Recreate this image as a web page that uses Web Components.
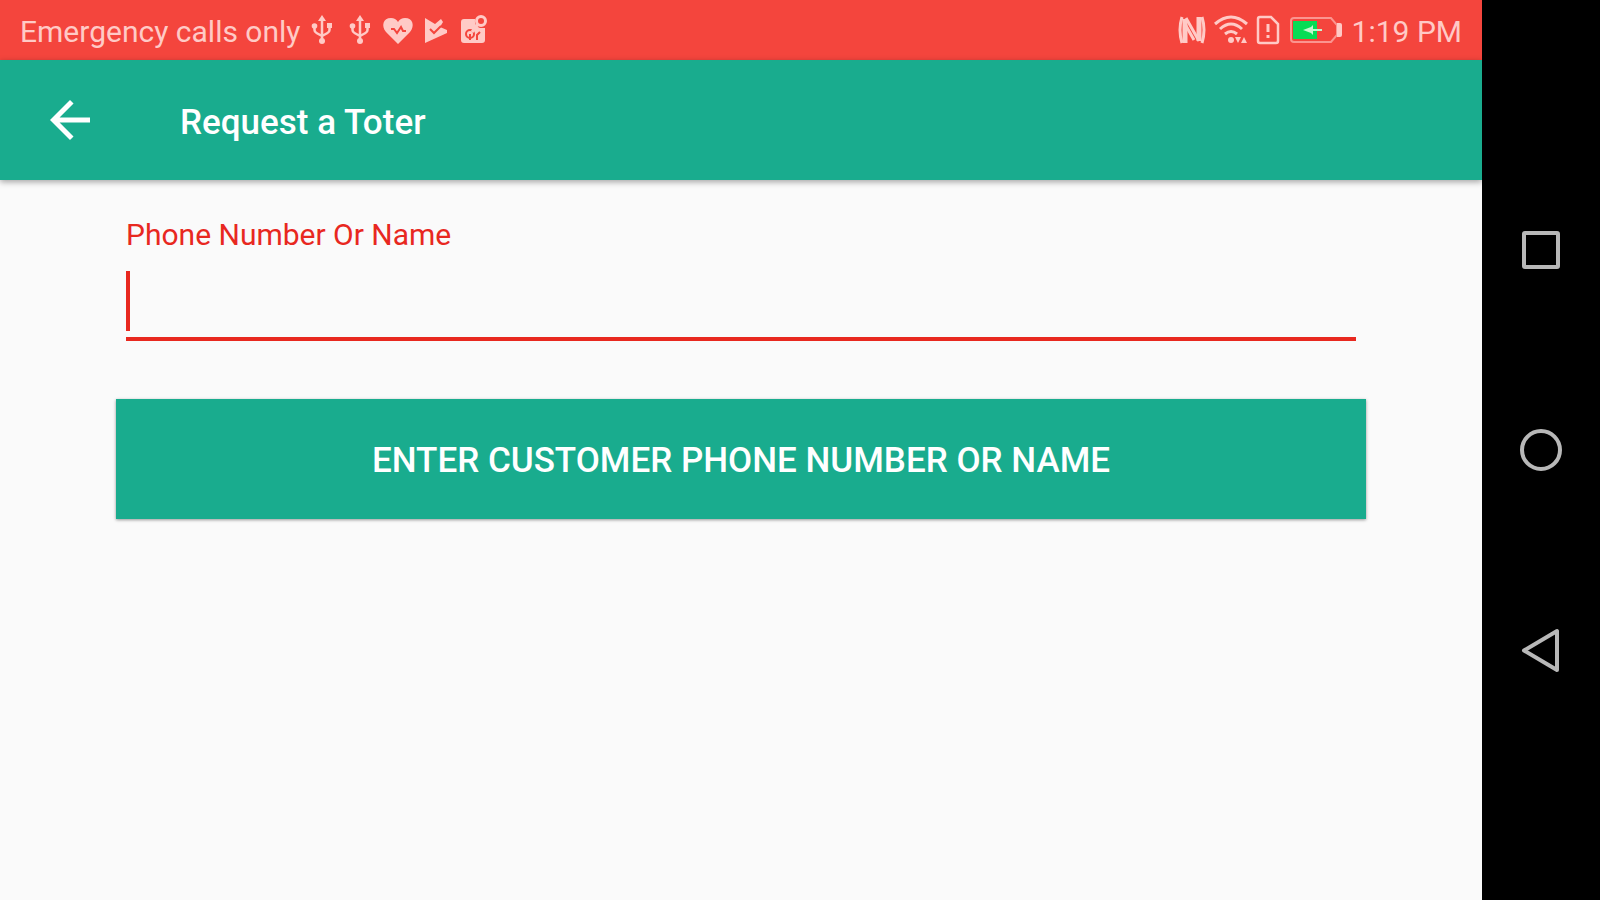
<!DOCTYPE html>
<html lang="en">
<head>
<meta charset="UTF-8">
<meta name="viewport" content="width=device-width, initial-scale=1">
<title>Request a Toter</title>
<style>
  body {
    margin: 0;
    font-family: Roboto, "Liberation Sans", sans-serif;
    --brand: #19ac8e;
    --accent: #e8281f;
    --status: #f4453d;
    --status-ink: #ffcac6;
  }
  form {
    display: flex;
    flex-direction: column;
    gap: 58px;
    padding: 37px 116px;
  }
</style>
</head>
<body>
<device-frame>
  <status-bar carrier="Emergency calls only" time="1:19 PM"></status-bar>
  <app-bar>Request a Toter</app-bar>
  <form>
    <text-field label="Phone Number Or Name"></text-field>
    <action-button>Enter customer phone number or name</action-button>
  </form>
  <nav-bar slot="nav"></nav-bar>
</device-frame>

<script>
class DeviceFrame extends HTMLElement {
  constructor() {
    super();
    this.attachShadow({ mode: 'open' });
    this.shadowRoot.innerHTML = `
      <style>
        :host {
          display: flex;
          min-height: 100vh;
          background: #fafafa;
        }
        main {
          flex: 1;
          min-width: 0;
        }
      </style>
      <main><slot></slot></main>
      <slot name="nav"></slot>
    `;
  }
}

class StatusBar extends HTMLElement {
  constructor() {
    super();
    this.attachShadow({ mode: 'open' });
  }

  connectedCallback() {
    const usb = `
      <svg width="38" height="30" viewBox="0 0 38 30" fill="currentColor">
        <path d="M19 0l4 6h-8z"/>
        <circle cx="19" cy="26" r="3"/>
        <circle cx="11.5" cy="11" r="2.8"/>
        <path d="M24 8h5v5h-5z"/>
        <path d="M19 4v21M11.5 11v4q0 2 2 3l5.500 3M26.500 11v4q0 2-2 3L19 21" fill="none" stroke="currentColor" stroke-width="2.500"/>
      </svg>`;

    this.shadowRoot.innerHTML = `
      <style>
        :host {
          display: flex;
          justify-content: space-between;
          align-items: center;
          height: 60px;
          padding: 0 20px;
          background: var(--status);
          color: var(--status-ink);
          font-size: 30px;
          line-height: 36px;
          white-space: nowrap;
        }
        div {
          display: flex;
          align-items: center;
        }
        span { padding-top: 4px; }
        .carrier { padding-right: 2px; }
        .system { gap: 8px; }
        svg { display: block; }
      </style>
      <div>
        <span class="carrier">${this.getAttribute('carrier')}</span>
        ${usb}
        ${usb}
        <!-- health -->
        <svg width="38" height="30" viewBox="0 0 38 30">
          <path d="M19 29L7 17C2 11 4 3 12 3c3 0 5.500 1.500 7 4 1.500-2.500 4-4 7-4 8 0 10 8 5 14z" fill="currentColor"/>
          <path d="M12 14h3l3 4 4-6 2 4h3" fill="none" stroke="var(--status)" stroke-width="2"/>
        </svg>
        <!-- play -->
        <svg width="38" height="30" viewBox="0 0 38 30">
          <path d="M8 3l10 6 6-5 2 3-3 5 7 3v3L8 28z" fill="currentColor"/>
          <path d="M13 14l4 4 7-7" fill="none" stroke="var(--status)" stroke-width="2"/>
        </svg>
        <!-- gallery -->
        <svg width="38" height="30" viewBox="0 0 38 30">
          <path d="M9 4h11q-1 7 5 9h5v12q0 3-3 3H9q-3 0-3-3V7q0-3 3-3z" fill="currentColor"/>
          <circle cx="15" cy="19" r="4" fill="none" stroke="var(--status)" stroke-width="2"/>
          <path d="M15 19v6M22 25v-5l3-3" fill="none" stroke="var(--status)" stroke-width="2"/>
          <circle cx="26" cy="6" r="4.500" fill="none" stroke="currentColor" stroke-width="3"/>
          <path d="M23 9l-6 8" stroke="currentColor" stroke-width="3"/>
        </svg>
      </div>
      <div class="system">
        <!-- nfc -->
        <svg width="28" height="30" viewBox="0 0 28 30" fill="none" stroke="currentColor">
          <path d="M4 2Q0 15 4 28M24 2q4 13 0 26" stroke-width="3"/>
          <path d="M7 28V4M21 26V2" stroke-width="5"/>
          <path d="M8 3l13 23M7 9l9 16" stroke-width="3"/>
        </svg>
        <!-- wifi with traffic arrows -->
        <svg width="34" height="30" viewBox="0 0 34 30" fill="none" stroke="currentColor" stroke-width="3">
          <path d="M1 9Q17-5 33 9M6 14q11-10 22 0M11 19q6-5 12 0"/>
          <circle cx="17" cy="25" r="3" fill="currentColor" stroke="none"/>
          <path d="M21 22h6l-3 6zM27 28h6l-3-6z" fill="currentColor" stroke="none"/>
        </svg>
        <!-- sim -->
        <svg width="24" height="30" viewBox="0 0 24 30" fill="none" stroke="currentColor" stroke-width="2.500">
          <path d="M4 2h11l7 7v17q0 2-2 2H4q-2 0-2-2V4q0-2 2-2z"/>
          <path d="M12 9v8M12 20v3" stroke-width="3"/>
        </svg>
        <!-- battery -->
        <svg width="56" height="30" viewBox="0 0 56 30">
          <path d="M6 3h37l6 7v10l-6 7H6q-3 0-3-3V6q0-3 3-3z" fill="none" stroke="currentColor" stroke-width="2" opacity=".6"/>
          <path d="M5 6h24v18H5z" fill="#06dd55"/>
          <path d="M49 8h3q2 0 2 2v10q0 2-2 2h-3z" fill="currentColor"/>
          <path d="M15 15l8-3 2-2v4h9v2h-9v4l-2-2z" fill="#c5f7d0"/>
        </svg>
        <span>${this.getAttribute('time')}</span>
      </div>
    `;
  }
}

class AppBar extends HTMLElement {
  constructor() {
    super();
    this.attachShadow({ mode: 'open' });
    this.shadowRoot.innerHTML = `
      <style>
        :host {
          display: flex;
          align-items: center;
          gap: 80px;
          height: 120px;
          padding: 0 40px;
          background: var(--brand);
          color: #fff;
          box-shadow: 0 2px 6px rgba(0, 0, 0, .35);
        }
        button {
          width: 60px;
          height: 60px;
          padding: 0;
          border: 0;
          background: none;
          color: inherit;
        }
        svg { display: block; }
        h1 {
          margin: 0;
          padding-top: 6px;
          font-size: 35px;
          line-height: 40px;
          font-weight: 500;
        }
      </style>
      <button type="button" aria-label="Back">
        <svg width="60" height="60" viewBox="0 0 24 24" fill="currentColor">
          <path d="M20 11H7.830l5.590-5.590L12 4l-8 8 8 8 1.410-1.410L7.830 13H20z"/>
        </svg>
      </button>
      <h1><slot></slot></h1>
    `;
  }
}

class TextField extends HTMLElement {
  constructor() {
    super();
    this.attachShadow({ mode: 'open' });
  }

  connectedCallback() {
    this.shadowRoot.innerHTML = `
      <style>
        :host {
          display: block;
          padding: 0 10px;
        }
        label {
          display: block;
          color: var(--accent);
          font-size: 30px;
          line-height: 36px;
        }
        /* thick caret, drawn as a background */
        input {
          display: block;
          box-sizing: border-box;
          width: 100%;
          height: 70px;
          margin-top: 18px;
          padding: 0 0 6px;
          border: 0;
          border-bottom: 4px solid var(--accent);
          outline: 0;
          background: linear-gradient(var(--accent), var(--accent)) left top / 4px 60px no-repeat;
          caret-color: transparent;
          font: 36px Roboto, sans-serif;
        }
        input:not(:placeholder-shown) {
          background: none;
          caret-color: var(--accent);
        }
      </style>
      <label for="field">${this.getAttribute('label')}</label>
      <input id="field" type="text" placeholder=" ">
    `;
  }
}

class ActionButton extends HTMLElement {
  constructor() {
    super();
    this.attachShadow({ mode: 'open' });
    this.shadowRoot.innerHTML = `
      <style>
        :host { display: block; }
        button {
          display: block;
          width: 100%;
          height: 120px;
          padding: 4px 0 0;
          border: 0;
          background: var(--brand);
          color: #fff;
          box-shadow: 0 1px 3px rgba(0, 0, 0, .4);
          font: 500 35px/40px Roboto, sans-serif;
          text-transform: uppercase;
        }
      </style>
      <button type="button"><slot></slot></button>
    `;
  }
}

class NavBar extends HTMLElement {
  constructor() {
    super();
    this.attachShadow({ mode: 'open' });
    this.shadowRoot.innerHTML = `
      <style>
        :host {
          display: block;
          width: 118px;
          background: #000;
        }
        nav {
          display: flex;
          flex-direction: column;
          justify-content: center;
          height: 100%;
        }
        button {
          display: grid;
          place-items: center;
          height: 200px;
          padding: 0;
          border: 0;
          background: none;
          color: #b8b8b8;
        }
        svg {
          fill: none;
          stroke: currentColor;
          stroke-width: 4;
          stroke-linejoin: round;
        }
      </style>
      <nav>
        <button type="button" aria-label="Recent apps">
          <svg width="46" height="46" viewBox="0 0 46 46"><rect x="6" y="6" width="34" height="34" rx="1"/></svg>
        </button>
        <button type="button" aria-label="Home">
          <svg width="46" height="46" viewBox="0 0 46 46"><circle cx="23" cy="23" r="19"/></svg>
        </button>
        <button type="button" aria-label="Back">
          <svg width="46" height="46" viewBox="0 0 46 46"><path d="M6 23.500L39 4v39z"/></svg>
        </button>
      </nav>
    `;
  }
}

customElements.define('device-frame', DeviceFrame);
customElements.define('status-bar', StatusBar);
customElements.define('app-bar', AppBar);
customElements.define('text-field', TextField);
customElements.define('action-button', ActionButton);
customElements.define('nav-bar', NavBar);
</script>
</body>
</html>
